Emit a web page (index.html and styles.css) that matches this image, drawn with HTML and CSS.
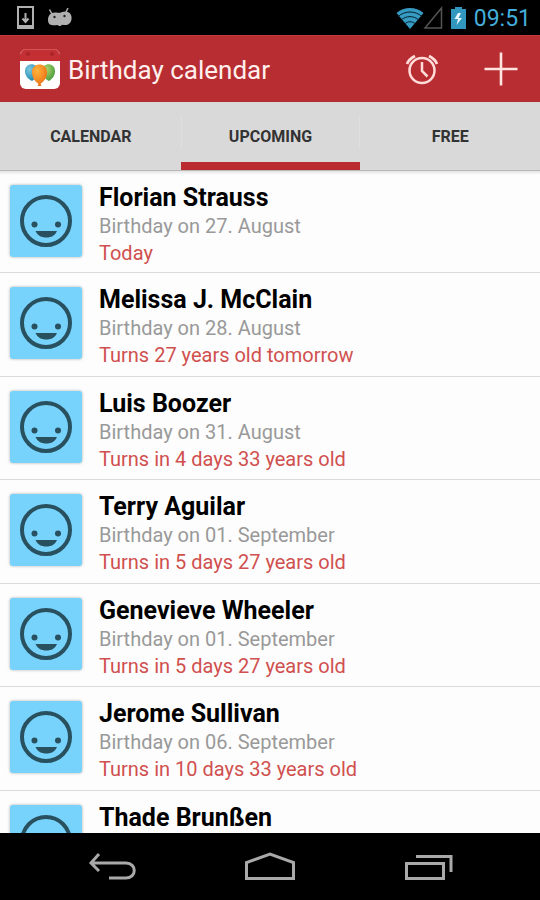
FILE: index.html
```
<!DOCTYPE html>
<html lang="en">
<head>
<meta charset="utf-8">
<meta name="viewport" content="width=device-width, initial-scale=1">
<title>Birthday calendar</title>
<link rel="stylesheet" href="styles.css">
</head>
<body>
<svg class="sprite" aria-hidden="true">
  <symbol id="face" viewBox="0 0 72 72">
    <circle cx="36" cy="36" r="24" fill="none" stroke="#29505f" stroke-width="4"/>
    <circle cx="24.500" cy="39.500" r="3" fill="#29505f"/>
    <circle cx="48" cy="39.500" r="3" fill="#29505f"/>
    <path d="M25.500 46h21.500c-2 4.500-5.500 6.500-10.700 6.500S27.500 50.500 25.500 46z" fill="#29505f"/>
  </symbol>
</svg>
<div class="screen">
  <div class="status">
    <div class="status-group">
      <svg width="17" height="23" viewBox="0 0 17 23"><path fill="#b0b0b0" fill-rule="evenodd" d="M0 0h17v23H0zM2 2v17h13V2z"/><path d="M8.500 7v8M5.500 12.500l3 3.500 3-3.500" fill="none" stroke="#b0b0b0" stroke-width="2"/></svg>
      <svg width="26" height="20" viewBox="0 0 26 20"><path d="M2.500 1.500L5 6M21 0l-2 4" stroke="#b0b0b0" stroke-width="1.500"/><path d="M1 12C1 7 4 4 9 4.500c3 .500 4 .500 6-.500 4-1.500 8 0 9 3 1.500 4 0 8-3 9.500-2 1-4 .500-6 .200-1 1.300-3 1.800-4.500.300C5 18 1 17 1 12z" fill="#b0b0b0"/><circle cx="7.500" cy="9" r="1.200" fill="#222"/><circle cx="17.500" cy="8" r="1.200" fill="#222"/></svg>
    </div>
    <div class="status-group status-right">
      <svg width="74" height="24" viewBox="0 0 74 24">
        <path d="M.500 7C8 .200 20 .200 27.500 7L14 23z" fill="#369ac2"/>
        <path d="M2 10.500c7-6 17-6 24 0M5 14c5.500-4.500 12.500-4.500 18 0M8.500 18c3.500-3 7.500-3 11 0" fill="none" stroke="#04202c" stroke-width="1"/>
        <path d="M45.500 2v20H29z" fill="none" stroke="#555" stroke-width="1.500"/>
        <path d="M55 3h4V1h7v2h4v20H55z" fill="#3297bf"/>
        <path d="M62 7l-3.500 6H62l-1.500 6 5.500-7h-3.500L65 7z" fill="#e6f7ff"/>
      </svg>
      <time class="clock">09:51</time>
    </div>
  </div>

  <header class="bar">
    <svg class="logo" width="40" height="40" viewBox="0 0 40 40">
      <defs>
        <radialGradient id="blue" cx=".35" cy=".3" r=".8"><stop offset="0" stop-color="#7cc8df"/><stop offset="1" stop-color="#1682a8"/></radialGradient>
        <radialGradient id="green" cx=".35" cy=".3" r=".8"><stop offset="0" stop-color="#a9d36b"/><stop offset="1" stop-color="#43983a"/></radialGradient>
        <radialGradient id="orange" cx=".35" cy=".3" r=".8"><stop offset="0" stop-color="#ffb43c"/><stop offset="1" stop-color="#ec6a13"/></radialGradient>
      </defs>
      <rect width="40" height="40" rx="6" fill="#fff"/>
      <path d="M0 12V6a6 6 0 0 1 6-6h28a6 6 0 0 1 6 6v6z" fill="#c42f33"/>
      <path d="M1 5q1-4.500 5-4.500h28q4 0 5 4.500" fill="none" stroke="#d35457"/>
      <circle cx="8" cy="5" r="2" fill="#aa252a"/><circle cx="32" cy="5" r="2" fill="#aa252a"/>
      <path d="M5 22c0-9 13-9 13 0 0 5-3 8-6 10-4-2-7-5-7-10z" fill="url(#blue)"/>
      <path d="M22 22c0-9 13-9 13 0 0 5-3 8-6 10-4-2-7-5-7-10z" fill="url(#green)"/>
      <path d="M12 23c0-10 15-10 15 0 0 6-3 9-6.500 12l1 2h-4l1-2c-3.500-3-6.500-6-6.500-12z" fill="url(#orange)"/>
    </svg>
    <h1 class="title">Birthday calendar</h1>
    <button class="action" type="button" aria-label="Reminders">
      <svg width="36" height="36" viewBox="0 0 36 36" fill="none" stroke="#ffdcd8" stroke-width="2.500"><circle cx="18" cy="19.500" r="12.500"/><path d="M18 11v9l5.500 5.500"/><path d="M3 13q2-5 8-8M33 13q-2-5-8-8" stroke-width="2.800"/></svg>
    </button>
    <button class="action" type="button" aria-label="Add birthday">
      <svg width="36" height="36" viewBox="0 0 36 36"><path d="M18 1.500v33M1.500 18h33" stroke="#ffe4e0" stroke-width="2.600"/></svg>
    </button>
  </header>

  <nav class="tabs">
    <button class="tab" type="button">CALENDAR</button>
    <button class="tab tab-active" type="button" aria-current="page">UPCOMING</button>
    <button class="tab" type="button">FREE</button>
  </nav>

  <ul class="list">
    <li class="row"><svg class="avatar"><use href="#face"/></svg><div class="info"><h2 class="name">Florian Strauss</h2><p class="date">Birthday on 27. August</p><p class="due">Today</p></div></li>
    <li class="row"><svg class="avatar"><use href="#face"/></svg><div class="info"><h2 class="name">Melissa J. McClain</h2><p class="date">Birthday on 28. August</p><p class="due">Turns 27 years old tomorrow</p></div></li>
    <li class="row"><svg class="avatar"><use href="#face"/></svg><div class="info"><h2 class="name">Luis Boozer</h2><p class="date">Birthday on 31. August</p><p class="due">Turns in 4 days 33 years old</p></div></li>
    <li class="row"><svg class="avatar"><use href="#face"/></svg><div class="info"><h2 class="name">Terry Aguilar</h2><p class="date">Birthday on 01. September</p><p class="due">Turns in 5 days 27 years old</p></div></li>
    <li class="row"><svg class="avatar"><use href="#face"/></svg><div class="info"><h2 class="name">Genevieve Wheeler</h2><p class="date">Birthday on 01. September</p><p class="due">Turns in 5 days 27 years old</p></div></li>
    <li class="row"><svg class="avatar"><use href="#face"/></svg><div class="info"><h2 class="name">Jerome Sullivan</h2><p class="date">Birthday on 06. September</p><p class="due">Turns in 10 days 33 years old</p></div></li>
    <li class="row"><svg class="avatar"><use href="#face"/></svg><div class="info"><h2 class="name">Thade Brunßen</h2></div></li>
  </ul>

  <footer class="nav">
    <button class="nav-button" type="button" aria-label="Back"><svg width="50" height="30" viewBox="0 0 50 30" fill="none" stroke="#a9a9a9" stroke-width="3"><path d="M12 2L4 11l8 8M4 11h35c11 0 11 15 0 15H22"/></svg></button>
    <button class="nav-button" type="button" aria-label="Home"><svg width="50" height="30" viewBox="0 0 50 30" fill="none" stroke="#a9a9a9" stroke-width="3"><path d="M1.500 26.500V10.500L25 2l23.500 8.500v16z"/></svg></button>
    <button class="nav-button" type="button" aria-label="Recent apps"><svg width="50" height="30" viewBox="0 0 50 30" fill="none" stroke="#a9a9a9" stroke-width="3"><path d="M3.500 11.500h37v15h-37zM13 4.500h35V20"/></svg></button>
  </footer>
</div>
</body>
</html>
```
FILE: styles.css
```
* {
  box-sizing: border-box;
}

body,
h1,
h2,
p,
ul {
  margin: 0;
  padding: 0;
}

body {
  background: #000;
  font-family: Roboto, "Liberation Sans", sans-serif;
}

button {
  padding: 0;
  border: 0;
  background: none;
  font: inherit;
}

svg {
  display: block;
}

.sprite {
  position: absolute;
  width: 0;
  height: 0;
}

.screen {
  display: flex;
  flex-direction: column;
  height: 100vh;
}

.status {
  display: flex;
  flex: none;
  align-items: center;
  justify-content: space-between;
  height: 35px;
  padding: 0 9px 0 17px;
}

.status-group {
  display: flex;
  align-items: center;
  gap: 13px;
}

.status-right {
  gap: 4px;
}

.clock {
  padding-top: 2px;
  color: #43aedb;
  font-size: 23px;
  line-height: 28px;
}

.bar {
  display: flex;
  flex: none;
  align-items: center;
  height: 67px;
  padding-left: 20px;
  background: #b82d32;
  border-top: 1px solid #c33c3f;
  border-bottom: 1px solid #a83034;
}

.logo {
  flex: none;
}

.title {
  flex: 1;
  padding: 2px 0 0 8px;
  color: #fff0ee;
  font-size: 26px;
  font-weight: 400;
  line-height: 32px;
}

.action {
  display: grid;
  place-items: center;
  flex: none;
  width: 79px;
  height: 65px;
}

.tabs {
  display: grid;
  flex: none;
  grid-template-columns: repeat(3, 1fr);
  height: 69px;
  padding-left: 1px;
  background: #d9d9d9;
  border-bottom: 1px solid #b8b8b8;
}

.tab {
  padding-top: 8px;
  border-bottom: 8px solid transparent;
  color: #333;
  font-size: 16px;
  font-weight: 700;
}

.tab-active {
  border-bottom-color: #ba2b31;
  background: linear-gradient(#dfdfdf, #dfdfdf) left center / 1px 34px no-repeat, linear-gradient(#dfdfdf, #dfdfdf) right center / 1px 34px no-repeat;
}

.list {
  flex: 1;
  min-height: 0;
  overflow: hidden;
  background: linear-gradient(#e4e4e4, #fdfdfd 4px);
  list-style: none;
}

.row {
  display: flex;
  gap: 17px;
  height: 103px;
  padding: 11px 10px 0;
  border-bottom: 1px solid #dadada;
}

.row:first-child {
  height: 102px;
}

.row:nth-child(even) {
  height: 104px;
}

.avatar {
  flex: none;
  width: 72px;
  height: 72px;
  margin-top: 3px;
  border-radius: 3px;
  background: #77d3fb;
  box-shadow: 0 0 3px #aaa;
}

.name {
  color: #000;
  font-size: 25px;
  font-weight: 700;
  line-height: 31px;
}

.date,
.due {
  color: #999;
  font-size: 20px;
  line-height: 27px;
}

.due {
  color: #d0504f;
}

.nav {
  display: flex;
  flex: none;
  justify-content: center;
  height: 67px;
}

.nav-button {
  display: grid;
  place-items: center;
  flex: 0 1 158px;
}
```
